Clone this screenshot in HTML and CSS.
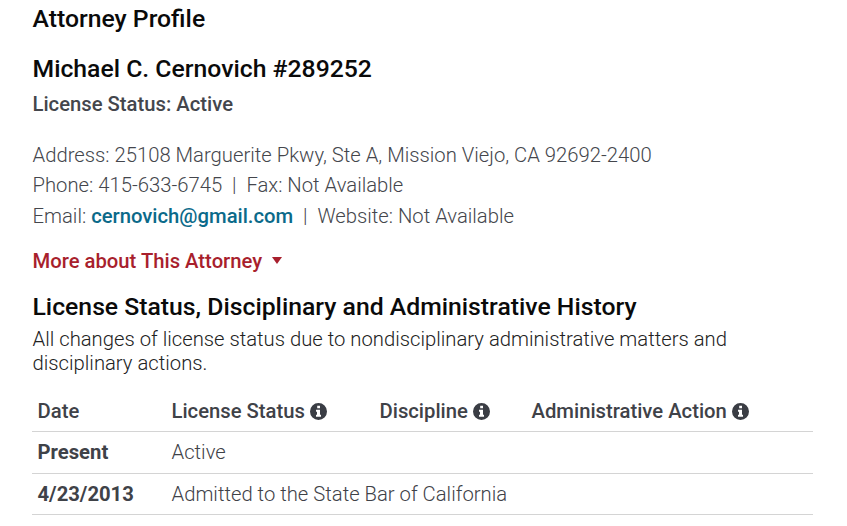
FILE: index.html
```html
<!DOCTYPE html>
<html lang="en">
<head>
<meta charset="utf-8">
<title>Attorney Profile</title>
<link rel="stylesheet" href="styles.css">
</head>
<body>
<svg class="defs" aria-hidden="true"><symbol id="info" viewBox="0 0 17 17"><path fill-rule="evenodd" d="M8.5 0a8.5 8.5 0 1 0 0 17a8.5 8.5 0 1 0 0-17z M7.2 2.8h2.8v2.4H7.2z M6 6.8h4v5h1v1.9H6v-1.9h1v-3.1H6z"/></symbol></svg>
<main class="page">
  <h2 class="page-title">Attorney Profile</h2>
  <h3 class="name">Michael C. Cernovich #289252</h3>
  <p class="status">License Status: Active</p>
  <div class="contact">
    <p>Address: 25108 Marguerite Pkwy, Ste A, Mission Viejo, CA 92692-2400</p>
    <p>Phone: 415-633-6745 &nbsp;|&nbsp; Fax: Not Available</p>
    <p>Email: <a class="email" href="#">cernovich@gmail.com</a> &nbsp;|&nbsp; Website: Not Available</p>
  </div>
  <a class="more" href="#">More about This Attorney<span class="caret"></span></a>
  <h3 class="history">License Status, Disciplinary and Administrative History</h3>
  <p class="intro">All changes of license status due to nondisciplinary administrative matters and disciplinary actions.</p>
  <table class="history-table">
    <thead>
      <tr>
        <th class="col-date">Date</th>
        <th class="col-status">License Status <svg class="info"><use href="#info"/></svg></th>
        <th class="col-disc">Discipline <svg class="info"><use href="#info"/></svg></th>
        <th>Administrative Action <svg class="info"><use href="#info"/></svg></th>
      </tr>
    </thead>
    <tbody>
      <tr><td class="date">Present</td><td colspan="3">Active</td></tr>
      <tr><td class="date">4/23/2013</td><td colspan="3">Admitted to the State Bar of California</td></tr>
    </tbody>
  </table>
</main>
</body>
</html>
```
FILE: styles.css
```css
* { box-sizing: border-box; }
html, body { margin: 0; padding: 0; background: #fff; }
body { font-family: Roboto, "Liberation Sans", sans-serif; color: #3f4248; overflow: hidden; height: 526px; }
.defs { display: none; }
.page { padding: 5px 34px 0 32px; }
p { margin: 0; }
.page-title { margin: 0 0 0 0.5px; font-size: 24.75px; line-height: 28px; font-weight: 500; color: #0a0a0a; }
.name { margin: 21px 0 0 0.5px; font-size: 24.75px; line-height: 30px; font-weight: 500; color: #0a0a0a; }
.status { margin: 8px 0 0 0.5px; font-size: 20.25px; line-height: 24px; font-weight: 500; color: #44464c; }
.contact { margin: 23.5px 0 0 0.5px; font-size: 20.25px; line-height: 30.5px; font-weight: 300; color: #44464c; }
.email { color: #0b6a8a; font-weight: 500; text-decoration: none; }
.more { display: block; margin: 17.5px 0 0 0.5px; font-size: 20.25px; line-height: 24px; font-weight: 500; color: #a81f2d; text-decoration: none; }
.caret { display: inline-block; margin-left: 9.5px; vertical-align: 4px; border-style: solid; border-width: 7px 5px 0; border-color: #a81f2d transparent transparent; }
.history { margin: 20px 0 0 0.5px; font-size: 24.75px; line-height: 28px; font-weight: 500; color: #0a0a0a; }
.intro { margin: 6px 0 0 0.5px; width: 740px; font-size: 20.25px; line-height: 24px; font-weight: 300; color: #222; }
.history-table { margin-top: 14px; width: 781px; border-collapse: collapse; font-size: 20.25px; }
.history-table th { text-align: left; font-weight: 500; padding: 10px 6px 8px 5.5px; line-height: 24px; border-bottom: 1px solid #d4d4d4; color: #3f4248; }
.history-table td { padding: 8px 6px 9px 5.5px; line-height: 24px; font-weight: 300; border-bottom: 1px solid #d4d4d4; color: #3f4248; }
.history-table tbody tr:last-child td { padding-bottom: 8px; }
.history-table td.date { font-weight: 700; }
.col-date { width: 134px; }
.col-status { width: 208px; }
.col-disc { width: 152px; }
.info { width: 17px; height: 17px; vertical-align: -2px; fill: #3a3d44; }
```
